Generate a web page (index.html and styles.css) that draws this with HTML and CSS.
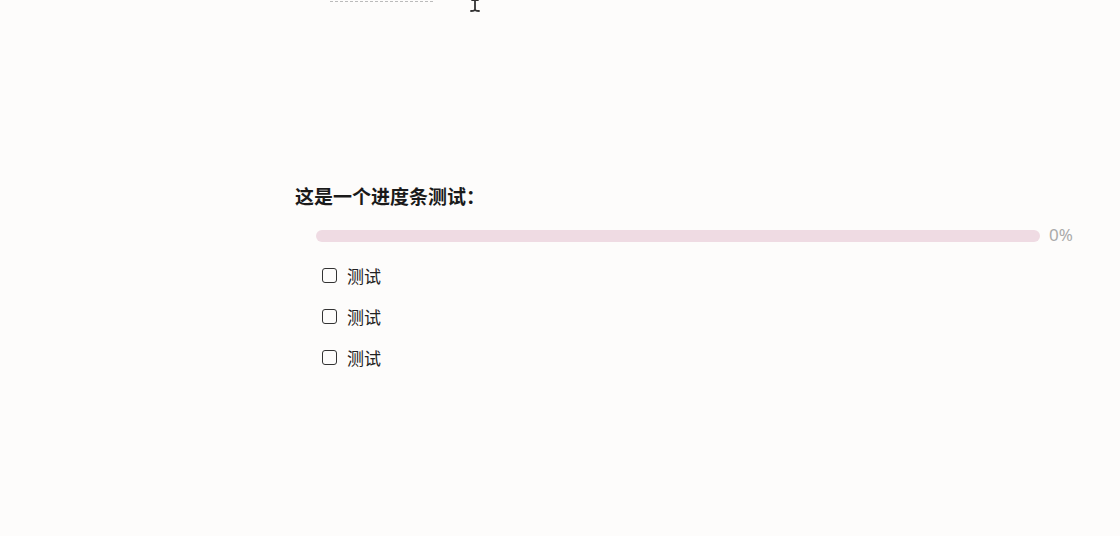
FILE: index.html
```html
<!DOCTYPE html>
<html lang="zh">
<head>
<meta charset="utf-8">
<link rel="stylesheet" href="styles.css">
</head>
<body>
<div class="page">
  <div class="top">
    <div class="dashed"></div>
    <svg class="cursor" width="12" height="14" viewBox="0 0 12 14"><path d="M3 1h6M6 1v9M2 12c2 0 4-.6 4-1.8 0 1.2 2 1.8 4 1.8" fill="none" stroke="#333" stroke-width="1.8" stroke-linecap="round"/></svg>
  </div>
  <div class="content">
    <h3 class="title">这是一个进度条测试：</h3>
    <div class="progress">
      <div class="track"><div class="fill" style="width:0%"></div></div>
      <span class="pct">0%</span>
    </div>
    <ul class="tasks">
      <li><span class="box"></span><span class="label">测试</span></li>
      <li><span class="box"></span><span class="label">测试</span></li>
      <li><span class="box"></span><span class="label">测试</span></li>
    </ul>
  </div>
</div>
</body>
</html>
```

FILE: styles.css
```css
html, body {
  margin: 0;
  padding: 0;
  background: #fdfcfb;
  font-family: "Noto Sans CJK SC", "Noto Sans", sans-serif;
  color: #222;
}
.page {
  width: 1120px;
  height: 536px;
  overflow: hidden;
  position: relative;
}
.top {
  height: 180px;
  position: relative;
}
.dashed {
  margin-left: 330px;
  width: 103px;
  border-top: 1px dashed #bbb;
  position: relative;
  top: 1px;
}
.cursor {
  position: absolute;
  left: 469px;
  top: -1px;
}
.content {
  padding-left: 295px;
  padding-right: 44px;
}
.title {
  margin: 0;
  font-size: 19px;
  font-weight: 700;
  line-height: 32px;
  color: #1a1a1a;
}
.progress {
  display: flex;
  align-items: center;
  margin: 13px 0 0 21px;
  gap: 9px;
  height: 22px;
}
.track {
  flex: 1;
  height: 12px;
  border-radius: 6px;
  background: #efdbe3;
  overflow: hidden;
}
.fill {
  height: 100%;
  background: #d4688f;
}
.pct {
  font-family: "Noto Sans", "Liberation Sans", sans-serif;
  font-size: 17px;
  line-height: 20px;
  margin-top: -3px;
  color: #aaa;
  width: 27px;
}
.tasks {
  list-style: none;
  margin: 8px 0 0 27px;
  padding: 0;
}
.tasks li {
  display: flex;
  align-items: center;
  height: 41px;
  gap: 10px;
}
.box {
  border: 1.5px solid #333;
  border-radius: 3px;
  box-sizing: border-box;
  width: 15px;
  height: 15px;
}
.label {
  font-size: 17px;
  color: #222;
}
```
